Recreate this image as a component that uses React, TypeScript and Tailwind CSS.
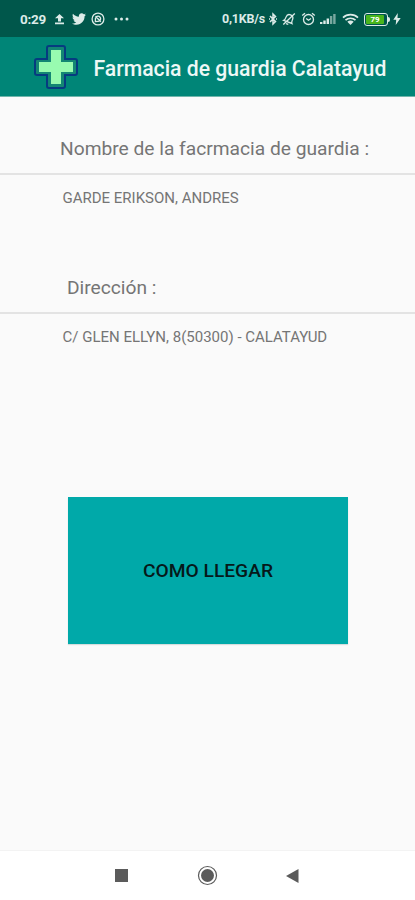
import React from 'react';
import { FaTwitter } from 'react-icons/fa';

const StatusBar: React.FC = () => (
  <div className="h-[37px] shrink-0 bg-[#00574b] flex items-center pl-5 pr-[14px] pt-px text-[#dcebe8]">
    <span className="w-[34px] text-[13.5px] leading-4 font-bold tracking-[-0.3px]">0:29</span>
    <svg width="11" height="12" viewBox="0 0 11 12" fill="currentColor">
      <path d="M5.5 1 10 5.2H7V8.5H4V5.2H1zM1 9.6h9v1.6H1z" />
    </svg>
    <FaTwitter size={14} className="ml-[7px]" />
    <svg className="ml-[5px]" width="14" height="14" viewBox="0 0 14 14" fill="none" stroke="currentColor" strokeWidth="1.3">
      <circle cx="7" cy="7" r="5.9" />
      <path d="M4.4 9.6V6.8a2.6 2.6 0 1 1 2.6 2.6zM4.5 4.3l5.3 5.5" />
    </svg>
    <svg className="ml-[9px]" width="15" height="4" viewBox="0 0 15 4" fill="currentColor">
      <circle cx="2" cy="2" r="1.5" />
      <circle cx="7.5" cy="2" r="1.5" />
      <circle cx="13" cy="2" r="1.5" />
    </svg>

    <span className="ml-auto w-[46px] text-[12.5px] leading-4 font-bold tracking-[-0.2px] whitespace-nowrap">0,1KB/s</span>
    <svg width="10" height="14" viewBox="0 0 10 14" fill="none" stroke="currentColor" strokeWidth="1.5">
      <path d="M2 4l5.5 5.6L5 12V2l2.5 2.4L2 10" />
      <path d="M1 7h1M8 7h1" />
    </svg>
    <svg className="ml-[4px]" width="14" height="14" viewBox="0 0 14 14" fill="none" stroke="currentColor" strokeWidth="1.3">
      <g transform="rotate(20 7 7)">
        <path d="M2.5 10.2h8.8c-1-1-.8-2-.8-4.2 0-2-1.4-3.5-3.5-3.5S3.6 4 3.6 6c0 2.2 0 3.2-1.1 4.2zM5.8 12.3h2.4" />
      </g>
      <path d="M12.800 1.500l-11.500 11" />
    </svg>
    <svg className="ml-[5px]" width="15" height="14" viewBox="0 0 15 14" fill="none" stroke="currentColor" strokeWidth="1.3">
      <circle cx="7.5" cy="7.5" r="5" />
      <path d="M5.2 6.5l2.3 1.8L10 6.5M1.200 3.600L4 1.200M13.800 3.600L11 1.200" />
    </svg>
    <svg className="ml-[4px]" width="16" height="12" viewBox="0 0 16 12" fill="currentColor">
      <path d="M0 9h2.400v2H0zM3.300 7.500h2.400V11H3.300zM6.600 5.500H9V11H6.600z" />
      <path d="M9.900 3h2.400v8H9.900zM13.200 1h2.400v10h-2.400z" opacity="0.55" />
    </svg>
    <svg className="ml-[6px]" width="17" height="13" viewBox="0 0 17 13" fill="none" stroke="currentColor" strokeWidth="1.6">
      <path d="M1 4.600C5 .6 12 .6 16 4.600M3.500 7.200c2.800-2.700 7.200-2.700 10 0" />
      <path d="M5.300 8.700c2-1.700 4.400-1.700 6.400 0L8.500 12z" fill="currentColor" stroke="none" />
    </svg>
    <div className="ml-[5px] flex items-center">
      <div className="w-[24px] h-[13px] rounded-[3px] border-[1.5px] border-[#dcebe8] p-px">
        <div className="w-[18px] h-full rounded-[1px] bg-[#48b51c] text-[8px] leading-[9px] font-bold text-center text-white">79</div>
      </div>
      <div className="w-[2px] h-[5px] rounded-r-sm bg-[#dcebe8]" />
    </div>
    <svg className="ml-[3px]" width="8" height="12" viewBox="0 0 8 12" fill="currentColor">
      <path d="M4.8 0 .3 6.8h2.900L2.700 12 7.700 5H4.500z" />
    </svg>
  </div>
);

const AppBar: React.FC = () => (
  <header className="h-[60px] shrink-0 bg-[#008577] border-b border-[#70b5ab] flex items-center pl-[33px]">
    <svg width="46" height="46" viewBox="0 0 46 46">
      <path
        d="M16 2h14q2 0 2 2v11h10q2 0 2 2v12q0 2-2 2H32v11q0 2-2 2H16q-2 0-2-2V31H4q-2 0-2-2V17q0-2 2-2h10V4q0-2 2-2z"
        fill="#138673"
        stroke="#063b80"
        strokeWidth="2"
      />
      <path d="M18 6h10v12h12v10H28v12H18V28H6V18h12z" fill="#98fbb0" />
    </svg>
    <h1 className="ml-[14.5px] text-[21.2px] leading-7 font-medium text-[#edf8f6] whitespace-nowrap pt-[4px]">
      Farmacia de guardia Calatayud
    </h1>
  </header>
);

const NavBar: React.FC = () => (
  <nav className="h-[50px] shrink-0 bg-white border-t border-[#f3f3f3] flex items-center pl-[115px] text-[#5b5b5b]">
    <div className="w-[13px] h-[13px] bg-current" />
    <svg className="ml-[69px]" width="21" height="21" viewBox="0 0 21 21">
      <circle cx="10.5" cy="10.5" r="9" fill="none" stroke="currentColor" strokeWidth="1.2" />
      <circle cx="10.5" cy="10.5" r="6.5" fill="currentColor" />
    </svg>
    <svg className="ml-[68px]" width="13" height="14" viewBox="0 0 13 14" fill="currentColor">
      <path d="M12.5 0v14L0 7z" />
    </svg>
  </nav>
);

export default function App() {
  return (
    <div className="w-full h-[900px] flex flex-col overflow-hidden bg-[#fafafa] font-['Roboto',sans-serif]">
      <StatusBar />
      <AppBar />

      <main className="flex-1 flex flex-col text-[#757575]">
        <section className="h-[139px]">
          <h2 className="h-[78px] pt-[40px] pl-[60px] border-b-2 border-[#e3e3e3] text-[19.2px] leading-6 whitespace-nowrap">
            Nombre de la facrmacia de guardia :
          </h2>
          <p className="pt-[13px] pl-[62.5px] text-[15px] leading-5 whitespace-nowrap">GARDE ERIKSON, ANDRES</p>
        </section>

        <section className="h-[261px]">
          <h2 className="h-[78px] pt-[40px] pl-[67px] border-b-2 border-[#e3e3e3] text-[19.2px] leading-6 whitespace-nowrap">
            Dirección :
          </h2>
          <p className="pt-[13px] pl-[62.5px] text-[15px] leading-5 whitespace-nowrap">
            C/ GLEN ELLYN, 8(50300) - CALATAYUD
          </p>
        </section>

        <button className="ml-[68px] w-[280px] h-[147px] pt-[2px] bg-[#00a9a9] shadow-[0_1px_1px_#d5dddd] text-[19.2px] font-medium text-[#06191a]">
          COMO LLEGAR
        </button>
      </main>

      <NavBar />
    </div>
  );
}
